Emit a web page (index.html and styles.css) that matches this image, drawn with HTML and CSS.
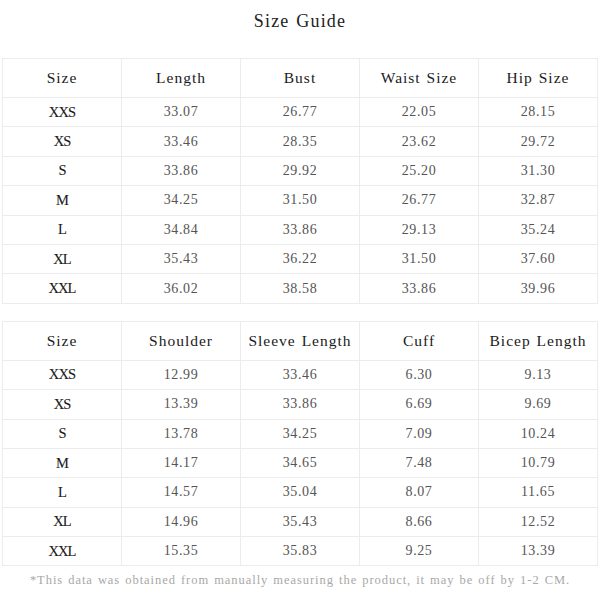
FILE: index.html
```html
<!DOCTYPE html>
<html>
<head>
<meta charset="utf-8">
<link rel="stylesheet" href="styles.css">
</head>
<body>
<div class="page">
  <h1 class="title">Size Guide</h1>
  <table class="size-table">
    <thead>
      <tr><th>Size</th><th>Length</th><th>Bust</th><th>Waist Size</th><th>Hip Size</th></tr>
    </thead>
    <tbody>
      <tr><td class="sz">XXS</td><td>33.07</td><td>26.77</td><td>22.05</td><td>28.15</td></tr>
      <tr><td class="sz">XS</td><td>33.46</td><td>28.35</td><td>23.62</td><td>29.72</td></tr>
      <tr><td class="sz">S</td><td>33.86</td><td>29.92</td><td>25.20</td><td>31.30</td></tr>
      <tr><td class="sz">M</td><td>34.25</td><td>31.50</td><td>26.77</td><td>32.87</td></tr>
      <tr><td class="sz">L</td><td>34.84</td><td>33.86</td><td>29.13</td><td>35.24</td></tr>
      <tr><td class="sz">XL</td><td>35.43</td><td>36.22</td><td>31.50</td><td>37.60</td></tr>
      <tr><td class="sz">XXL</td><td>36.02</td><td>38.58</td><td>33.86</td><td>39.96</td></tr>
    </tbody>
  </table>
  <table class="size-table second">
    <thead>
      <tr><th>Size</th><th>Shoulder</th><th>Sleeve Length</th><th>Cuff</th><th>Bicep Length</th></tr>
    </thead>
    <tbody>
      <tr><td class="sz">XXS</td><td>12.99</td><td>33.46</td><td>6.30</td><td>9.13</td></tr>
      <tr><td class="sz">XS</td><td>13.39</td><td>33.86</td><td>6.69</td><td>9.69</td></tr>
      <tr><td class="sz">S</td><td>13.78</td><td>34.25</td><td>7.09</td><td>10.24</td></tr>
      <tr><td class="sz">M</td><td>14.17</td><td>34.65</td><td>7.48</td><td>10.79</td></tr>
      <tr><td class="sz">L</td><td>14.57</td><td>35.04</td><td>8.07</td><td>11.65</td></tr>
      <tr><td class="sz">XL</td><td>14.96</td><td>35.43</td><td>8.66</td><td>12.52</td></tr>
      <tr><td class="sz">XXL</td><td>15.35</td><td>35.83</td><td>9.25</td><td>13.39</td></tr>
    </tbody>
  </table>
  <p class="note">*This data was obtained from manually measuring the product, it may be off by 1-2 CM.</p>
</div>
</body>
</html>
```
FILE: styles.css
```css
* { box-sizing: border-box; }
html, body {
  margin: 0;
  padding: 0;
  background: #ffffff;
}
body {
  font-family: "Liberation Serif", "DejaVu Serif", serif;
  color: #333;
}
.page {
  width: 600px;
  padding: 0 2px 0 2px;
}
.title {
  margin: 0;
  height: 42px;
  line-height: 42px;
  text-align: center;
  font-size: 18px;
  font-weight: normal;
  letter-spacing: 1.2px;
  word-spacing: 1px;
  color: #222;
}
.size-table {
  margin-top: 16px;
  width: 596px;
  border-collapse: collapse;
  table-layout: fixed;
}
.size-table.second {
  margin-top: 17px;
}
.size-table th,
.size-table td {
  border: 1px solid #ececec;
  text-align: center;
  padding: 0;
  font-weight: normal;
}
.size-table th {
  height: 39px;
  font-size: 15.5px;
  letter-spacing: 1px;
  word-spacing: 1px;
  color: #1a1a1a;
}
.size-table td {
  height: 29.4px;
  font-size: 14px;
  letter-spacing: 0.6px;
  color: #555;
}
.size-table td.sz {
  color: #1a1a1a;
  font-size: 14.5px;
  letter-spacing: -0.9px;
  -webkit-text-stroke: 0.1px #1a1a1a;
}
.note {
  margin: 0;
  height: 28px;
  line-height: 28px;
  text-align: center;
  font-size: 12.5px;
  letter-spacing: 0.95px;
  word-spacing: 1px;
  color: #a8a8a8;
  white-space: nowrap;
}
```
